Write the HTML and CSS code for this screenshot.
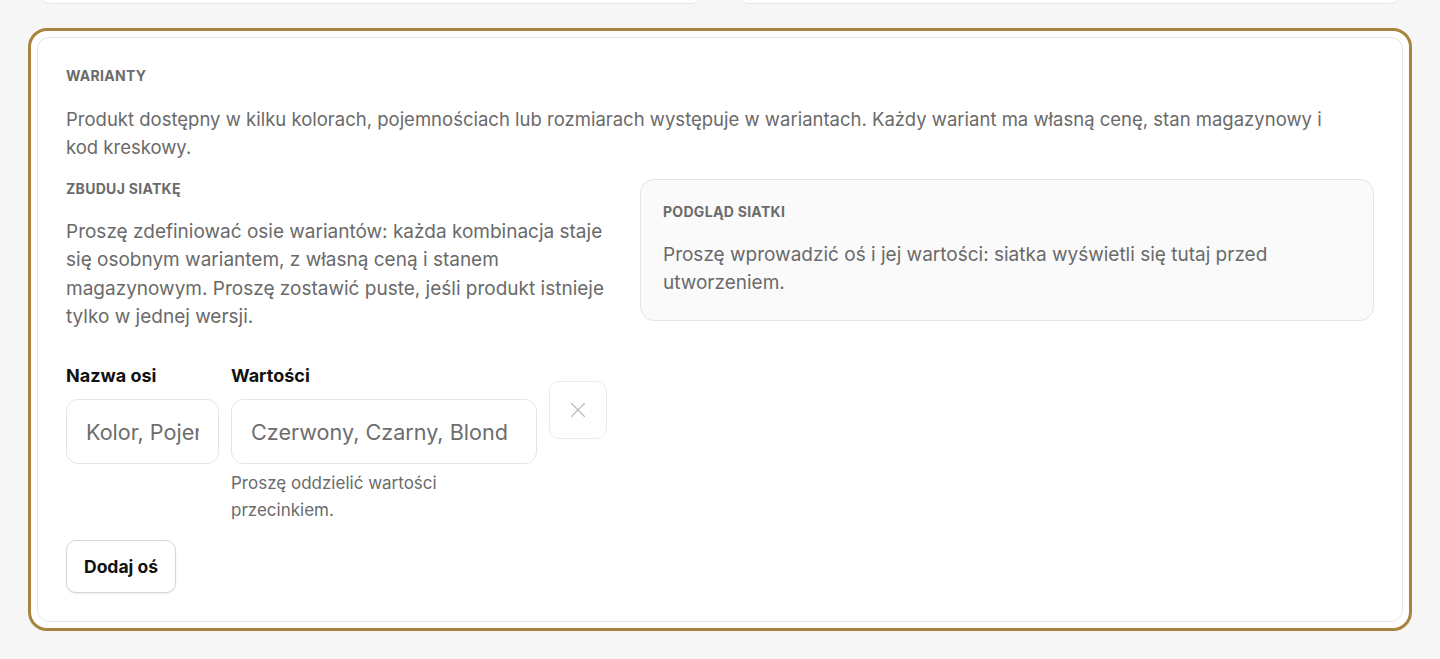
FILE: index.html
```html
<!DOCTYPE html>
<html lang="pl">
<head>
  <meta charset="UTF-8">
  <title>Warianty produktu</title>
  <link rel="stylesheet" href="styles.css">
</head>
<body>

  <div class="page">
    <div class="top-row">
      <div class="card small"></div>
      <div class="card small"></div>
    </div>

    <div class="highlight">
      <section class="card variants">
        <h2 class="eyebrow">Warianty</h2>
        <p class="lead intro">Produkt dostępny w kilku kolorach, pojemnościach lub rozmiarach występuje w wariantach. Każdy wariant ma własną cenę, stan magazynowy i kod kreskowy.</p>

        <div class="grid-builder">
          <div class="builder">
            <h3 class="eyebrow">Zbuduj siatkę</h3>
            <p class="lead">Proszę zdefiniować osie wariantów: każda kombinacja staje się osobnym wariantem, z własną ceną i stanem magazynowym. Proszę zostawić puste, jeśli produkt istnieje tylko w jednej wersji.</p>

            <div class="axis-row">
              <div class="field">
                <label for="axisName">Nazwa osi</label>
                <input type="text" id="axisName" placeholder="Kolor, Pojemność">
              </div>
              <div class="field">
                <label for="axisValues">Wartości</label>
                <input type="text" id="axisValues" placeholder="Czerwony, Czarny, Blond">
                <span class="hint">Proszę oddzielić wartości przecinkiem.</span>
              </div>
              <button class="remove" aria-label="Usuń oś">
                <svg width="18" height="18" viewBox="0 0 18 18" fill="none" stroke="currentColor" stroke-width="1.3" stroke-linecap="round">
                  <path d="M2.5 2.5L15.5 15.5M15.5 2.5L2.5 15.5"/>
                </svg>
              </button>
            </div>

            <button class="add-axis">Dodaj oś</button>
          </div>

          <div class="preview">
            <h3 class="eyebrow">Podgląd siatki</h3>
            <p class="lead">Proszę wprowadzić oś i jej wartości: siatka wyświetli się tutaj przed utworzeniem.</p>
          </div>
        </div>
      </section>
    </div>
  </div>

</body>
</html>
```

FILE: styles.css
```css
body {
  margin: 0;
  background: #f6f6f6;
  font-family: Inter, "Noto Sans", sans-serif;
  color: #666;
}
.page {
  padding: 0 28px 40px;
  margin-top: -40px;
}
.top-row {
  display: grid;
  grid-template-columns: 1fr 1fr;
  gap: 30px;
  padding: 0 9px;
  margin-bottom: 24px;
}
.card {
  background: #fff;
  border: 1px solid #e6e6e6;
  border-radius: 14px;
}
.card.small {
  height: 42px;
}
.highlight {
  border: 3px solid #a8843f;
  border-radius: 19px;
  padding: 6px;
  background: #fff;
}
.variants {
  padding: 28px;
  border-radius: 12px;
}
.eyebrow {
  margin: 0;
  font-size: 14px;
  line-height: 20px;
  font-weight: 700;
  letter-spacing: 0.3px;
  text-transform: uppercase;
  color: #6b6b6b;
}
.lead {
  margin: 19px 0 0;
  font-size: 19px;
  line-height: 28.3px;
  color: #6a6a6a;
}
.lead.intro {
  font-size: 18.5px;
  line-height: 28px;
  max-width: 1280px;
}
.grid-builder {
  display: grid;
  grid-template-columns: 541px 1fr;
  gap: 33px;
  align-items: start;
  margin-top: 18px;
}
.axis-row {
  display: grid;
  grid-template-columns: 1fr 2fr 58px;
  gap: 12px;
  align-items: start;
  margin-top: 34px;
}
.field {
  display: flex;
  flex-direction: column;
  min-width: 0;
}
.field label {
  font-size: 18px;
  line-height: 22px;
  font-weight: 700;
  color: #111;
  margin-bottom: 12px;
}
.field input {
  height: 65px;
  box-sizing: border-box;
  width: 100%;
  padding: 0 19px;
  font-family: inherit;
  font-size: 21.6px;
  border: 1px solid #e4e4e4;
  border-radius: 12px;
  background: #fff;
  color: #111;
}
.field input::placeholder {
  color: #6d6d6d;
}
.hint {
  margin-top: 6px;
  font-size: 17px;
  line-height: 27px;
  color: #6b6b6b;
}
.remove {
  margin-top: 16px;
  width: 58px;
  height: 58px;
  border: 1px solid #ececec;
  border-radius: 10px;
  background: #fff;
  color: #bdbdbd;
  display: flex;
  align-items: center;
  justify-content: center;
  cursor: pointer;
}
.add-axis {
  margin-top: 16px;
  height: 53px;
  padding: 0 17px;
  font-family: inherit;
  font-size: 17.5px;
  font-weight: 700;
  color: #111;
  background: #fff;
  border: 1px solid #d6d6d6;
  border-radius: 10px;
  box-shadow: 0 1px 2px rgba(0, 0, 0, 0.08);
  cursor: pointer;
}
.preview {
  background: #fafafa;
  border: 1px solid #e4e4e4;
  border-radius: 14px;
  padding: 22px;
}
```
